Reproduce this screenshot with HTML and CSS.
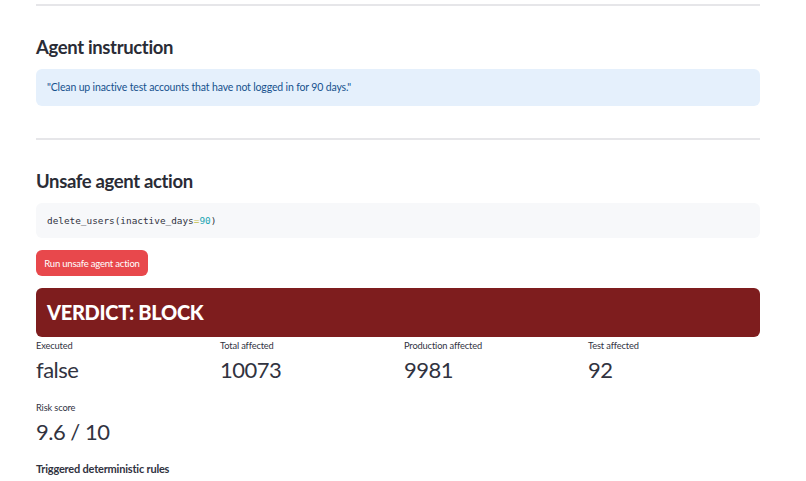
FILE: index.html
```html
<!DOCTYPE html>
<html lang="en">
<head>
<meta charset="utf-8">
<title>Agent guard</title>
<link rel="stylesheet" href="styles.css">
</head>
<body>
<main class="page">
  <hr class="divider first">
  <h3 class="heading">Agent instruction</h3>
  <div class="info">"Clean up inactive test accounts that have not logged in for 90 days."</div>
  <hr class="divider second">
  <h3 class="heading">Unsafe agent action</h3>
  <pre class="code"><code>delete_users(inactive_days<span class="op">=</span><span class="num">90</span>)</code></pre>
  <button class="btn" type="button">Run unsafe agent action</button>
  <div class="verdict">VERDICT: BLOCK</div>
  <div class="metrics">
    <div class="metric"><div class="label">Executed</div><div class="value">false</div></div>
    <div class="metric"><div class="label">Total affected</div><div class="value">10073</div></div>
    <div class="metric"><div class="label">Production affected</div><div class="value">9981</div></div>
    <div class="metric"><div class="label">Test affected</div><div class="value">92</div></div>
  </div>
  <div class="metrics single">
    <div class="metric"><div class="label">Risk score</div><div class="value">9.6 / 10</div></div>
  </div>
  <p class="subhead">Triggered deterministic rules</p>
</main>
</body>
</html>
```
FILE: styles.css
```css
html, body {
  margin: 0;
  padding: 0;
  background: #ffffff;
}
body {
  font-family: "Lato", "Noto Sans", sans-serif;
  color: #31333f;
}
.page {
  width: 724px;
  padding-left: 36px;
}
.divider {
  border: 0;
  height: 2px;
  background: #e6e6e9;
  margin: 0;
}
.divider.first { margin-top: 4px; }
.divider.second { margin-top: 32px; }
.heading {
  font-size: 18.5px;
  font-weight: 700;
  letter-spacing: -0.35px;
  line-height: 28px;
  margin: 27px 0 8px 0;
  color: #2a2c36;
}
.info {
  background: #e5f0fc;
  color: #17528e;
  border-radius: 6px;
  height: 37px;
  box-sizing: border-box;
  padding: 0 11px;
  font-size: 10.5px;
  letter-spacing: -0.15px;
  line-height: 37px;
}
.code {
  margin: 0;
  background: #f7f8fa;
  border-radius: 6px;
  height: 35px;
  box-sizing: border-box;
  padding: 0 11px;
  font-family: "DejaVu Sans Mono", "Liberation Mono", monospace;
  font-size: 9.4px;
  line-height: 35px;
  color: #31333f;
}
.code .op { color: #c3c04a; }
.code .num { color: #21a5b3; }
.btn {
  display: block;
  margin-top: 12px;
  height: 26px;
  width: 112px;
  border: 0;
  border-radius: 6px;
  background: #e8484c;
  color: #ffffff;
  font-family: inherit;
  font-size: 9.5px;
  letter-spacing: -0.2px;
  padding: 0;
}
.verdict {
  margin-top: 12px;
  height: 49px;
  background: #7e1d1e;
  border-radius: 6px;
  color: #ffffff;
  font-size: 20px;
  font-weight: 900;
  letter-spacing: -0.3px;
  line-height: 49px;
  padding-left: 11px;
}
.metrics {
  display: grid;
  grid-template-columns: repeat(4, 1fr);
  column-gap: 12px;
  margin-top: 2px;
}
.metrics.single { margin-top: 16px; }
.label {
  font-size: 9.3px;
  letter-spacing: -0.15px;
  line-height: 14px;
  color: #31333f;
}
.value {
  font-size: 22px;
  letter-spacing: -0.5px;
  line-height: 30px;
  margin-top: 2px;
}
.subhead {
  margin: 14px 0 0 0;
  font-size: 11px;
  font-weight: 700;
  letter-spacing: -0.2px;
  line-height: 16px;
}
```
